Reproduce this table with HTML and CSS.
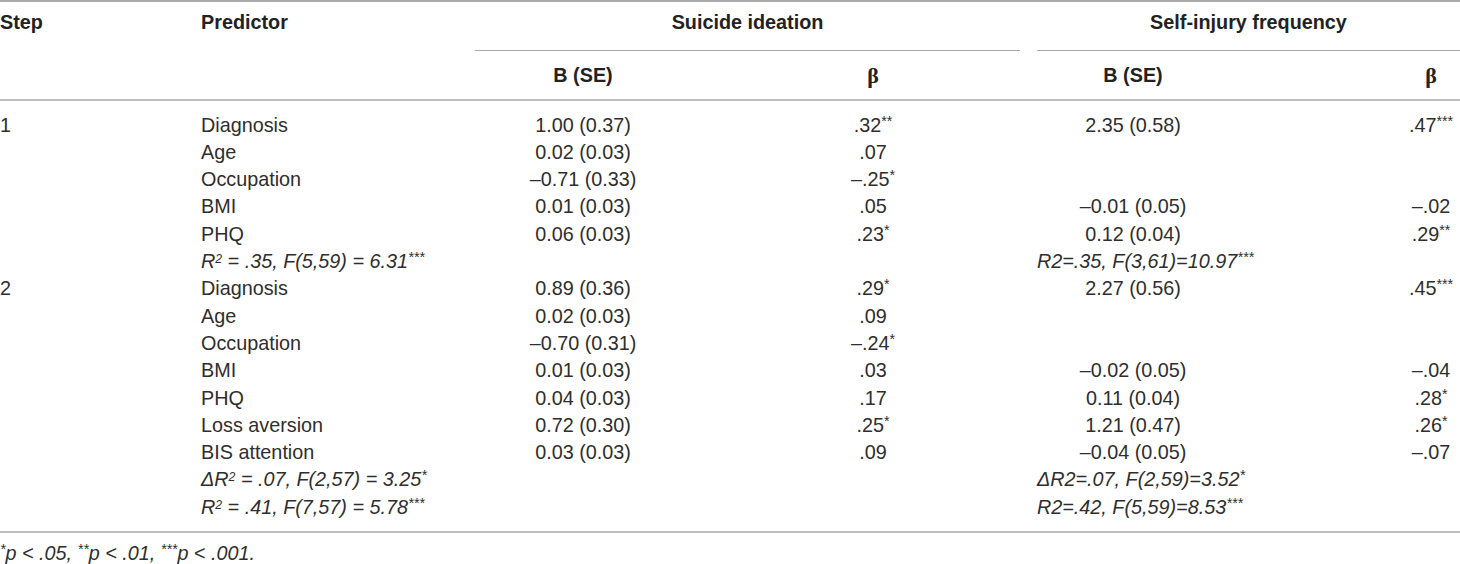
FILE: index.html
```html
<!DOCTYPE html>
<html lang="en">

<head>
    <meta charset="UTF-8">
    <title>Hierarchical regression table</title>
    <link rel="stylesheet" href="styles.css">
</head>

<body>
    <div class="reg-table">
        <!-- header -->
        <div class="head-top row">
            <div class="th">Step</div>
            <div class="th">Predictor</div>
            <div class="th group group-si">Suicide ideation</div>
            <div class="th group group-self">Self-injury frequency</div>
        </div>
        <div class="head-sub row">
            <div></div>
            <div></div>
            <div class="th c-b">B (SE)</div>
            <div class="th c-beta beta">β</div>
            <div class="th c-b">B (SE)</div>
            <div class="th c-beta2 beta">β</div>
        </div>

        <!-- body -->
        <div class="body">
            <div class="row">
                <div>1</div><div>Diagnosis</div>
                <div class="c-b">1.00 (0.37)</div><div class="c-beta">.32<sup>**</sup></div>
                <div class="c-b">2.35 (0.58)</div><div class="c-beta2">.47<sup>***</sup></div>
            </div>
            <div class="row">
                <div></div><div>Age</div>
                <div class="c-b">0.02 (0.03)</div><div class="c-beta">.07</div>
                <div></div><div></div>
            </div>
            <div class="row">
                <div></div><div>Occupation</div>
                <div class="c-b">–0.71 (0.33)</div><div class="c-beta">–.25<sup>*</sup></div>
                <div></div><div></div>
            </div>
            <div class="row">
                <div></div><div>BMI</div>
                <div class="c-b">0.01 (0.03)</div><div class="c-beta">.05</div>
                <div class="c-b">–0.01 (0.05)</div><div class="c-beta2">–.02</div>
            </div>
            <div class="row">
                <div></div><div>PHQ</div>
                <div class="c-b">0.06 (0.03)</div><div class="c-beta">.23<sup>*</sup></div>
                <div class="c-b">0.12 (0.04)</div><div class="c-beta2">.29<sup>**</sup></div>
            </div>
            <div class="row">
                <div></div>
                <div class="stat span-si">R<sup class="sq">2</sup> = .35, F(5,59) = 6.31<sup>***</sup></div>
                <div class="stat span-self">R2=.35, F(3,61)=10.97<sup>***</sup></div>
            </div>
            <div class="row">
                <div>2</div><div>Diagnosis</div>
                <div class="c-b">0.89 (0.36)</div><div class="c-beta">.29<sup>*</sup></div>
                <div class="c-b">2.27 (0.56)</div><div class="c-beta2">.45<sup>***</sup></div>
            </div>
            <div class="row">
                <div></div><div>Age</div>
                <div class="c-b">0.02 (0.03)</div><div class="c-beta">.09</div>
                <div></div><div></div>
            </div>
            <div class="row">
                <div></div><div>Occupation</div>
                <div class="c-b">–0.70 (0.31)</div><div class="c-beta">–.24<sup>*</sup></div>
                <div></div><div></div>
            </div>
            <div class="row">
                <div></div><div>BMI</div>
                <div class="c-b">0.01 (0.03)</div><div class="c-beta">.03</div>
                <div class="c-b">–0.02 (0.05)</div><div class="c-beta2">–.04</div>
            </div>
            <div class="row">
                <div></div><div>PHQ</div>
                <div class="c-b">0.04 (0.03)</div><div class="c-beta">.17</div>
                <div class="c-b">0.11 (0.04)</div><div class="c-beta2">.28<sup>*</sup></div>
            </div>
            <div class="row">
                <div></div><div>Loss aversion</div>
                <div class="c-b">0.72 (0.30)</div><div class="c-beta">.25<sup>*</sup></div>
                <div class="c-b">1.21 (0.47)</div><div class="c-beta2">.26<sup>*</sup></div>
            </div>
            <div class="row">
                <div></div><div>BIS attention</div>
                <div class="c-b">0.03 (0.03)</div><div class="c-beta">.09</div>
                <div class="c-b">–0.04 (0.05)</div><div class="c-beta2">–.07</div>
            </div>
            <div class="row">
                <div></div>
                <div class="stat span-si">ΔR<sup class="sq">2</sup> = .07, F(2,57) = 3.25<sup>*</sup></div>
                <div class="stat span-self">ΔR2=.07, F(2,59)=3.52<sup>*</sup></div>
            </div>
            <div class="row">
                <div></div>
                <div class="stat span-si">R<sup class="sq">2</sup> = .41, F(7,57) = 5.78<sup>***</sup></div>
                <div class="stat span-self">R2=.42, F(5,59)=8.53<sup>***</sup></div>
            </div>
        </div>
    </div>

    <p class="footnote"><sup>*</sup>p &lt; .05, <sup>**</sup>p &lt; .01, <sup>***</sup>p &lt; .001.</p>
</body>

</html>
```

FILE: styles.css
```css
body {
    margin: 0;
    background: #fff;
    color: #2e2e2e;
    font-family: "Liberation Sans", Arial, sans-serif;
    font-size: 19.8px;
    line-height: 27.3px;
}

.reg-table {
    width: 1460px;
    border-top: 2px solid #a9a9a9;
    border-bottom: 2px solid #bdbdbd;
}

.row {
    display: grid;
    grid-template-columns: 201px 274px 216px 346px 192px 231px;
}

.th {
    font-weight: bold;
    color: #222;
}

.head-top > div {
    padding-top: 7px;
    padding-bottom: 14px;
}

.group {
    text-align: center;
    border-bottom: 1px solid #a9a9a9;
}

.group-si {
    grid-column: 3 / 5;
    margin-right: 17px;
}

.group-self {
    grid-column: 5 / 7;
}

.head-sub {
    border-bottom: 2px solid #bdbdbd;
}

.head-sub > div {
    padding-top: 11px;
    padding-bottom: 9px;
}

.beta {
    font-family: "Liberation Serif", "Times New Roman", serif;
    font-size: 22px;
}

.body {
    padding-top: 11px;
    padding-bottom: 10px;
}

.c-b {
    text-align: center;
}

.c-beta {
    text-align: center;
    padding-left: 18px;
}

.c-beta2 {
    text-align: center;
    padding-left: 173px;
}

.stat {
    font-style: italic;
}

.span-si {
    grid-column: 2 / 5;
}

.span-self {
    grid-column: 5 / 7;
}

sup {
    font-size: 0.72em;
    line-height: 0;
    vertical-align: 0.42em;
}

sup.sq {
    font-size: 0.62em;
}

.footnote {
    margin: 7px 0 0;
    font-style: italic;
}
```
